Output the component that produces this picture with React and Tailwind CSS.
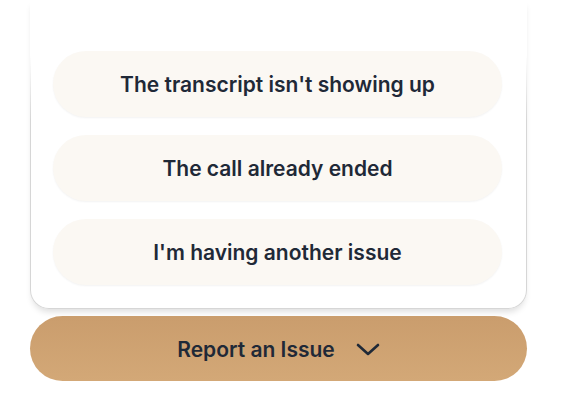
export default function App() {
  const options = [
    "The transcript isn't showing up",
    "The call already ended",
    "I'm having another issue",
  ];
  return (
    <div
      className="w-[566px] h-[398px] bg-white overflow-hidden pl-[30px]"
      style={{ fontFamily: "Inter, 'Noto Sans', sans-serif" }}
    >
      <div className="w-[497px] flex flex-col">
        <div className="px-px pb-px rounded-b-[19px] bg-gradient-to-b from-white from-[55px] to-[#d6d6d6] to-[120px] shadow-[0_5px_6px_-2px_rgba(0,0,0,0.13)]">
          <div className="bg-white rounded-b-[18px] pt-[51px] pb-[23px] px-[22px] flex flex-col gap-[18px]">
            {options.map((o) => (
              <div
                key={o}
                className="h-[66px] w-[449px] rounded-full bg-[#fbf8f3] shadow-[0_1px_2px_rgba(0,0,0,0.05)] flex items-center justify-center pt-px text-[21px] font-semibold text-[#1f2937]"
              >
                {o}
              </div>
            ))}
          </div>
        </div>
        <div className="mt-[7px] h-[65px] rounded-full bg-gradient-to-b from-[#ca9d6d] to-[#d3a877] flex items-center justify-center gap-[21px] pt-[2px] text-[21px] font-semibold text-[#1f2937]">
          <span>Report an Issue</span>
          <svg width="24" height="14" viewBox="0 0 24 14" fill="none">
            <path d="M2 2 L12 11 L22 2" stroke="#1f2937" strokeWidth="2.6" strokeLinecap="round" strokeLinejoin="round" />
          </svg>
        </div>
      </div>
    </div>
  );
}
